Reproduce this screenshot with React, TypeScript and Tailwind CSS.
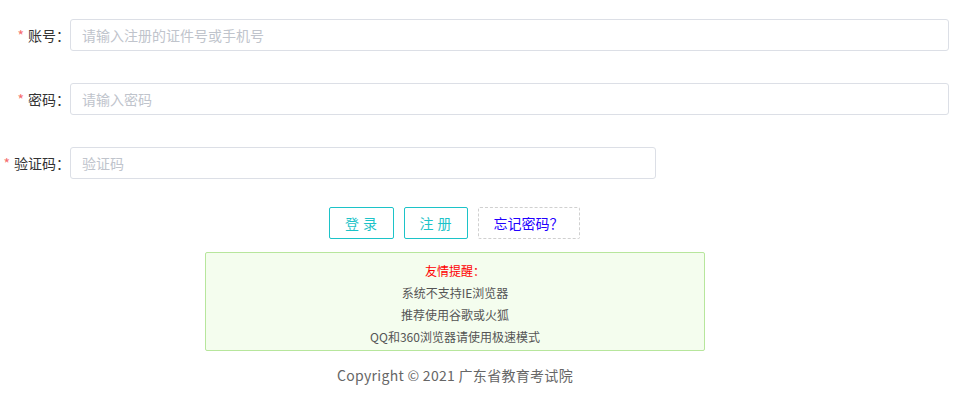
import React from 'react';

const font = { fontFamily: '"Noto Sans CJK SC", "Noto Sans", sans-serif' };

const rows = [
  { label: '账号', placeholder: '请输入注册的证件号或手机号', width: 'w-[879px]' },
  { label: '密码', placeholder: '请输入密码', width: 'w-[879px]' },
  { label: '验证码', placeholder: '验证码', width: 'w-[586px]' },
];

const App: React.FC = () => {
  return (
    <div className="w-[955px] h-[396px] bg-white" style={font}>
      {/* Form rows */}
      <div className="pt-[19px] flex flex-col gap-[32px]">
        {rows.map((row) => (
          <div key={row.label} className="flex items-center h-[32px]">
            <label className="w-[70px] text-right text-[14px] text-[#333] whitespace-nowrap">
              <span className="text-[#f56c6c] mr-[4px]">*</span>
              {row.label}：
            </label>
            <input
              type="text"
              placeholder={row.placeholder}
              className={`${row.width} h-[32px] border border-[#dcdfe6] rounded-[3px] px-[11px] text-[14px] outline-none placeholder:text-[#c0c4cc]`}
            />
          </div>
        ))}
      </div>

      {/* Buttons */}
      <div className="w-[908px] mt-[28px] flex justify-center gap-[10px]">
        <button className="w-[65px] h-[32px] border border-[#1cc3c8] rounded-[2px] text-[#1cc3c8] text-[14px] tracking-[4px] pl-[4px]">
          登录
        </button>
        <button className="w-[64px] h-[32px] border border-[#1cc3c8] rounded-[2px] text-[#1cc3c8] text-[14px] tracking-[4px] pl-[4px]">
          注册
        </button>
        <button className="w-[102px] h-[32px] border border-dashed border-[#d0d0d0] rounded-[2px] text-[#2200ff] text-[14px]">
          忘记密码？
        </button>
      </div>

      {/* Notice */}
      <div className="w-[910px] mt-[13px] flex justify-center">
        <div className="w-[500px] h-[99px] border border-[#b7e69c] rounded-[2px] bg-[#f4fdee] pt-[7px] flex flex-col items-center text-[12px] leading-[22px] text-[#555]">
          <p className="text-[#ff0000]">友情提醒：</p>
          <p>系统不支持IE浏览器</p>
          <p>推荐使用谷歌或火狐</p>
          <p>QQ和360浏览器请使用极速模式</p>
        </div>
      </div>

      {/* Footer */}
      <div className="w-[910px] mt-[14px] text-center text-[14px] text-[#666] tracking-[0.3px]">
        Copyright © 2021 广东省教育考试院
      </div>
    </div>
  );
};

export default App;
